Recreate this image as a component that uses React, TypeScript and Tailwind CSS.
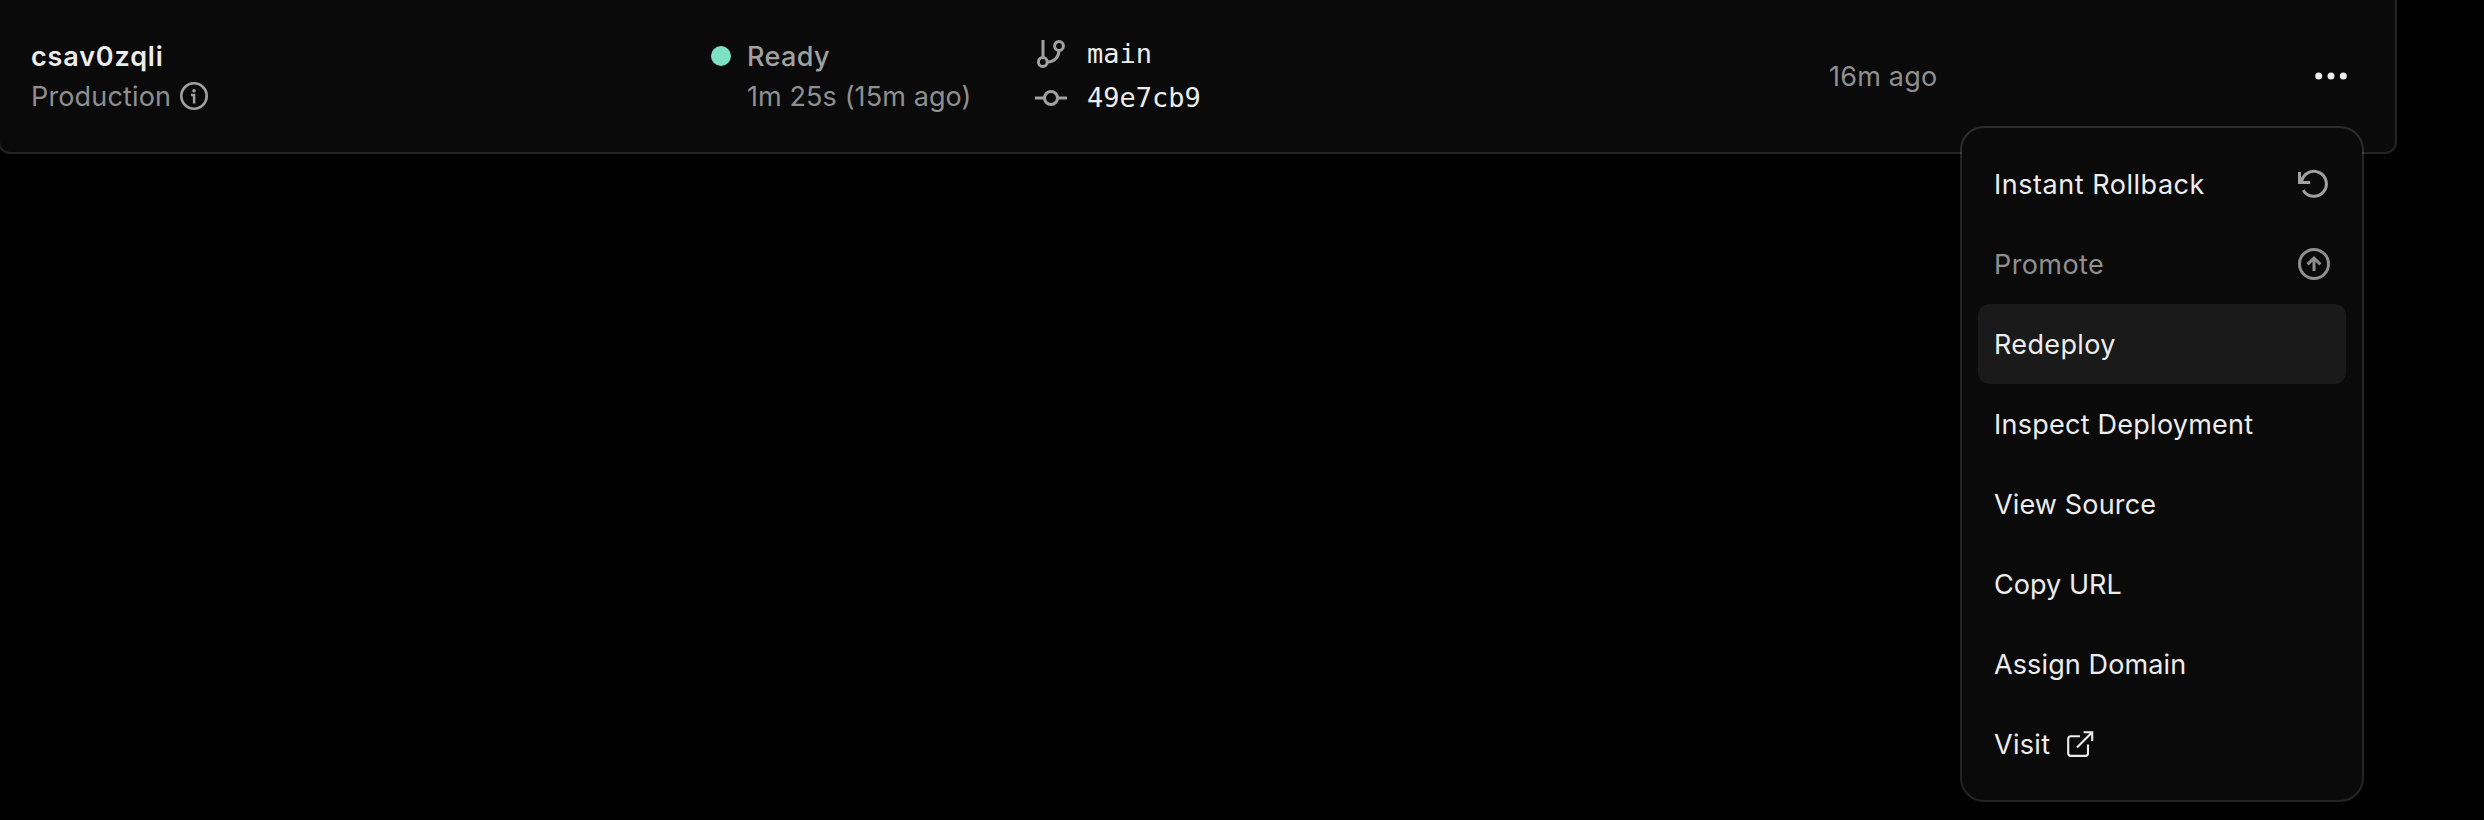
import type { ReactNode } from 'react';

const stroke = { fill: 'none', stroke: 'currentColor' } as const;

function InfoIcon() {
  return (
    <svg className="ml-[9px] size-7 text-[#a1a1a1]" viewBox="0 0 28 28">
      <circle cx="14" cy="14" r="12.7" strokeWidth="2.6" {...stroke} />
      <path d="M11 12.9h3.1V21.5" strokeWidth="2.5" {...stroke} />
      <circle cx="14" cy="8.8" r="1.8" fill="currentColor" />
    </svg>
  );
}

function BranchIcon() {
  return (
    <svg className="size-8 text-[#a1a1a1]" viewBox="0 0 32 32" strokeWidth="3" {...stroke}>
      <path d="M8 2v17.5M24 12.5c0 6.5-5 11.5-11.5 11.5" />
      <circle cx="7.8" cy="24" r="4.4" />
      <circle cx="24" cy="8" r="4.4" />
    </svg>
  );
}

function CommitIcon() {
  return (
    <svg className="size-8 text-[#a1a1a1]" viewBox="0 0 32 32" strokeWidth="3" {...stroke}>
      <path d="M0 16h9.5M22.5 16H32" />
      <circle cx="16" cy="16" r="6.5" />
    </svg>
  );
}

function MoreIcon() {
  return (
    <svg className="size-8 text-[#ededed]" viewBox="0 0 32 32" fill="currentColor">
      <circle cx="3.7" cy="16" r="3.5" />
      <circle cx="16" cy="16" r="3.5" />
      <circle cx="28.3" cy="16" r="3.5" />
    </svg>
  );
}

function RollbackIcon() {
  return (
    <svg className="size-8 text-[#a1a1a1]" viewBox="0 0 32 32" strokeWidth="3" {...stroke}>
      <path d="M1.5 4v10.4h10.7" />
      <path d="M3.6 13.6A12.5 12.5 0 1 1 5.2 22.3" />
    </svg>
  );
}

function PromoteIcon() {
  return (
    <svg className="size-8" viewBox="0 0 32 32" strokeWidth="3" {...stroke}>
      <circle cx="16" cy="16" r="14.5" />
      <path d="M16 23V10M9.6 16.4 16 10l6.4 6.4" />
    </svg>
  );
}

function ExternalIcon() {
  return (
    <svg className="h-[27px] w-[27px]" viewBox="0 0 27 27" strokeWidth="2.1" {...stroke}>
      <path d="M13 5.3H3.8A2.6 2.6 0 0 0 1.2 7.9v14.4a2.6 2.6 0 0 0 2.6 2.6h14.6a2.6 2.6 0 0 0 2.6-2.6V13.5" />
      <path d="M16.6 1.2h8.6v8.8M25.2 1.2 10 16.4" />
    </svg>
  );
}

type Item = { label: string; tone: string; tracking: string; icon?: ReactNode; trailing?: ReactNode };

const items: Item[] = [
  { label: 'Instant Rollback', tone: 'text-[#ededed]', tracking: 'tracking-[0.53px]', trailing: <RollbackIcon /> },
  { label: 'Promote', tone: 'text-[#8f8f8f]', tracking: 'tracking-[0.4px]', trailing: <PromoteIcon /> },
  { label: 'Redeploy', tone: 'bg-[#1a1a1a] text-[#ededed]', tracking: 'tracking-[0.35px]' },
  { label: 'Inspect Deployment', tone: 'text-[#ededed]', tracking: 'tracking-[0.25px]' },
  { label: 'View Source', tone: 'text-[#ededed]', tracking: 'tracking-[0.15px]' },
  { label: 'Copy URL', tone: 'text-[#ededed]', tracking: 'tracking-[0.05px]' },
  { label: 'Assign Domain', tone: 'text-[#ededed]', tracking: 'tracking-[0.12px]' },
  { label: 'Visit', tone: 'text-[#ededed]', tracking: 'tracking-[0.3px]', icon: <ExternalIcon /> },
];

export default function App() {
  return (
    <div className="relative h-[820px] w-[2484px] overflow-hidden bg-black font-['Inter',sans-serif] text-[27px] leading-10 whitespace-nowrap text-[#8f8f8f]">
      <div className="-ml-0.5 flex h-[154px] w-[2399px] items-start rounded-b-xl border-2 border-t-0 border-[#242424] bg-[#0a0a0a] pt-9 pl-[31px]">
        <div className="w-[680px]">
          <div className="pt-px font-semibold tracking-[0.85px] text-[#ededed]">csav0zqli</div>
          <div className="-mt-0.5 flex items-center">
            <span className="pt-0.5 tracking-[0.15px]">Production</span>
            <InfoIcon />
          </div>
        </div>
        <div className="flex w-[324px] gap-4">
          <span className="mt-2.5 size-5 rounded-full bg-[#7ce2c3]" />
          <div className="pt-px">
            <div className="font-medium tracking-[0.4px] text-[#a1a1a1]">Ready</div>
            <div className="tracking-[0.1px]">1m 25s (15m ago)</div>
          </div>
        </div>
        <div className="-mt-1 w-[794px] font-['DejaVu_Sans_Mono',monospace] text-[#ededed]">
          <div className="flex h-11 items-center gap-5">
            <BranchIcon />
            <span>main</span>
          </div>
          <div className="flex h-11 items-center gap-5">
            <CommitIcon />
            <span>49e7cb9</span>
          </div>
        </div>
        <div className="mt-[21px] w-[486px] tracking-[0.2px]">16m ago</div>
        <div className="mt-6">
          <MoreIcon />
        </div>
      </div>

      <div className="absolute top-[126px] left-[1960px] w-[404px] rounded-3xl border-2 border-white/14 bg-[#0a0a0a] bg-clip-padding p-4">
        {items.map((item) => (
          <div key={item.label} className={`flex h-20 items-center rounded-xl px-4 ${item.tone}`}>
            <span className={`pt-0.5 ${item.tracking}`}>{item.label}</span>
            {item.icon && <span className="ml-[17px]">{item.icon}</span>}
            {item.trailing && <span className="ml-auto">{item.trailing}</span>}
          </div>
        ))}
      </div>
    </div>
  );
}
